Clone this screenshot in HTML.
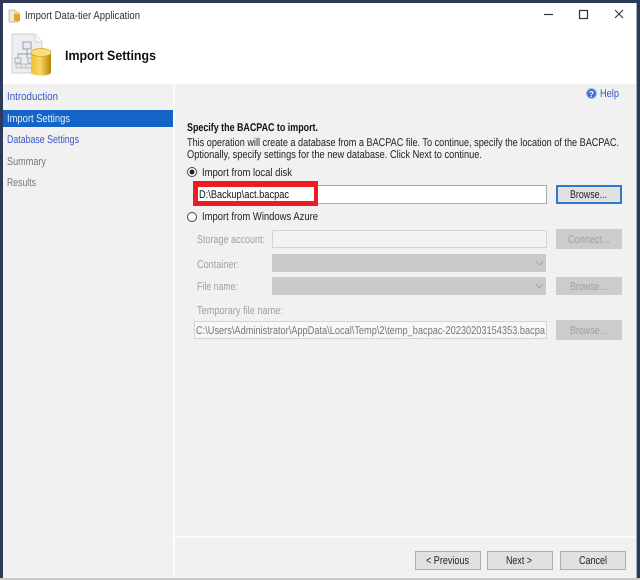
<!DOCTYPE html>
<html><head><meta charset="utf-8"><style>
html,body{margin:0;padding:0;background:#fff}
svg{display:block;filter:blur(.35px)}
text{font-family:"Liberation Sans",sans-serif;font-size:11.2px;fill:#222}
.d{fill:#a0a0a0}
.l{fill:#3a55c8}
</style></head><body>
<svg width="640" height="580" viewBox="0 0 640 580" xmlns="http://www.w3.org/2000/svg" shape-rendering="crispEdges">
<rect width="640" height="580" fill="#fff"/>
<rect x="3" y="84" width="634" height="494" fill="#f0f1f0"/>
<rect x="173" y="84" width="2" height="494" fill="#fbfbfb"/>
<rect x="175" y="536" width="462" height="2" fill="#fbfbfb"/>
<rect width="640" height="3" fill="#2a3a58"/>
<rect width="3" height="580" fill="#2a3a58"/>
<rect x="637" width="3" height="580" fill="#2a3a58"/>
<rect x="636" y="3" width="1" height="575" fill="#a8b0b8"/>
<rect y="578" width="640" height="2" fill="#c8c8c8"/>

<!-- title icon -->
<g shape-rendering="auto">
<path d="M9 10h6l3 3v9H9z" fill="#e8e8e8" stroke="#aaa" stroke-width=".7"/>
<rect x="14" y="13" width="6" height="8" rx="1" fill="#e0a820"/>
<ellipse cx="17" cy="13" rx="3" ry="1.3" fill="#f5d870"/>
<!-- header icon -->
<path d="M12 34h23l7 8v31H12z" fill="#eeeeee" stroke="#d0d0d0"/>
<path d="M35 34v8h7" fill="#f8f8f8" stroke="#d4d4d4"/>
<rect x="23" y="42" width="8" height="7" fill="#e4ecf2" stroke="#8a9aa8" stroke-width=".9"/>
<path d="M27 49v5M18 58v-4h19v4M27 54v4" fill="none" stroke="#8a9aa8" stroke-width=".9"/>
<rect x="15" y="58" width="6" height="5" fill="#e4ecf2" stroke="#9aa6b0" stroke-width=".8"/>
<rect x="28" y="58" width="6" height="5" fill="#e4ecf2" stroke="#9aa6b0" stroke-width=".8"/>
<path d="M16 64h16v4H16zM21 64v4M26 64v4" fill="#e8e8e8" stroke="#b4b4b4" stroke-width=".8"/>
<defs><linearGradient id="c" x1="0" x2="1" y1="0" y2="0"><stop offset="0" stop-color="#f0c030"/><stop offset=".45" stop-color="#f6d868"/><stop offset="1" stop-color="#b88408"/></linearGradient></defs>
<path d="M31 53v19c0 2.500 5 3.500 10.500 3.500S51 74.500 51 72V53z" fill="url(#c)"/>
<ellipse cx="41" cy="52.500" rx="10" ry="4" fill="#f8de80" stroke="#d8a820" stroke-width=".8"/>
<!-- help icon -->
<circle cx="591.500" cy="93.500" r="5" fill="#3f6fc8" stroke="#a8bce8"/>
<text x="589" y="97" style="font-size:8px;font-weight:bold;fill:#fff">?</text>
<!-- window buttons -->
<path d="M544 14.500h9" stroke="#333" stroke-width="1.200" fill="none"/>
<rect x="579.500" y="10.500" width="8" height="8" fill="none" stroke="#333" stroke-width="1.200"/>
<path d="M615 10l8 8M623 10l-8 8" stroke="#333" stroke-width="1.100" fill="none"/>
<!-- text -->
<g shape-rendering="auto" text-rendering="geometricPrecision">
<text x="25" y="19" textLength="115" lengthAdjust="spacingAndGlyphs" style="fill:#333">Import Data-tier Application</text>
<text x="65" y="60" textLength="91" lengthAdjust="spacingAndGlyphs" style="font-size:13.500px;font-weight:bold;fill:#111">Import Settings</text>
<text x="7" y="100" textLength="51" lengthAdjust="spacingAndGlyphs" class="l">Introduction</text>
<rect x="3" y="110" width="170" height="17" fill="#1464c8"/>
<text x="7" y="122" textLength="63" lengthAdjust="spacingAndGlyphs" style="fill:#e8f0ff">Import Settings</text>
<text x="7" y="143" textLength="72" lengthAdjust="spacingAndGlyphs" class="l">Database Settings</text>
<text x="7" y="165" textLength="39" lengthAdjust="spacingAndGlyphs" style="fill:#777">Summary</text>
<text x="7" y="186" textLength="29" lengthAdjust="spacingAndGlyphs" style="fill:#777">Results</text>
<text x="600" y="97" textLength="19" lengthAdjust="spacingAndGlyphs" class="l">Help</text>
<text x="187" y="131" textLength="131" lengthAdjust="spacingAndGlyphs" style="font-weight:bold;fill:#111">Specify the BACPAC to import.</text>
<text x="187" y="146" textLength="432" lengthAdjust="spacingAndGlyphs">This operation will create a database from a BACPAC file. To continue, specify the location of the BACPAC.</text>
<text x="187" y="158" textLength="295" lengthAdjust="spacingAndGlyphs">Optionally, specify settings for the new database. Click Next to continue.</text>
<circle cx="192" cy="172" r="4.500" fill="#fff" stroke="#444"/>
<circle cx="192" cy="172" r="2.500" fill="#222"/>
<text x="202" y="176" textLength="90" lengthAdjust="spacingAndGlyphs">Import from local disk</text>
<circle cx="192" cy="217" r="4.500" fill="#fff" stroke="#444"/>
<text x="202" y="220" textLength="116" lengthAdjust="spacingAndGlyphs">Import from Windows Azure</text>
</g>
</g>

<!-- main input -->
<rect x="193.500" y="185.500" width="353" height="18" fill="#fff" stroke="#a8a8a8"/>
<path d="M193 181h125v25H193z M198 187v14h116v-14z" fill="#ed1c24" fill-rule="evenodd"/>
<rect x="556" y="185" width="66" height="19" fill="#2a7ad0"/>
<rect x="558" y="187" width="62" height="15" fill="#e1e1e1"/>

<!-- disabled -->
<rect x="272.500" y="230.500" width="274" height="17" fill="#f2f3f2" stroke="#d4d4d4"/>
<rect x="556" y="229" width="66" height="20" fill="#cccccc"/>
<rect x="272" y="254" width="274" height="18" fill="#cacaca"/>
<rect x="272" y="277" width="274" height="18" fill="#cacaca"/>
<rect x="556" y="277" width="66" height="18" fill="#cccccc"/>
<rect x="194.500" y="321.500" width="352" height="17" fill="#f6f7f6" stroke="#d4d4d4"/>
<rect x="556" y="320" width="66" height="20" fill="#cccccc"/>
<g shape-rendering="auto">
<path d="M536 261.500l3.500 3.500 3.500-3.500M536 284.500l3.500 3.500 3.500-3.500" fill="none" stroke="#a4a4a4"/>
</g>

<!-- bottom buttons -->
<g fill="#e1e1e1" stroke="#adadad">
<rect x="415.500" y="551.500" width="65" height="18"/>
<rect x="487.500" y="551.500" width="65" height="18"/>
<rect x="560.500" y="551.500" width="65" height="18"/>
</g>

<g shape-rendering="auto" text-rendering="geometricPrecision">
<text x="199" y="198" textLength="90" lengthAdjust="spacingAndGlyphs" style="fill:#111">D:\Backup\act.bacpac</text>
<text x="570" y="198" textLength="37" lengthAdjust="spacingAndGlyphs" style="fill:#222">Browse...</text>
<text x="197" y="243" textLength="68" lengthAdjust="spacingAndGlyphs" class="d">Storage account:</text>
<text x="568" y="243" textLength="42" lengthAdjust="spacingAndGlyphs" class="d">Connect...</text>
<text x="197" y="268" textLength="42" lengthAdjust="spacingAndGlyphs" class="d">Container:</text>
<text x="197" y="290" textLength="41" lengthAdjust="spacingAndGlyphs" class="d">File name:</text>
<text x="570" y="290" textLength="37" lengthAdjust="spacingAndGlyphs" class="d">Browse...</text>
<text x="197" y="314" textLength="86" lengthAdjust="spacingAndGlyphs" class="d">Temporary file name:</text>
<text x="196" y="334" textLength="349" lengthAdjust="spacingAndGlyphs" style="fill:#777">C:\Users\Administrator\AppData\Local\Temp\2\temp_bacpac-20230203154353.bacpa</text>
<text x="570" y="334" textLength="37" lengthAdjust="spacingAndGlyphs" class="d">Browse...</text>
<text x="426" y="564" textLength="43" lengthAdjust="spacingAndGlyphs">&lt; Previous</text>
<text x="506" y="564" textLength="26" lengthAdjust="spacingAndGlyphs">Next &gt;</text>
<text x="579" y="564" textLength="28" lengthAdjust="spacingAndGlyphs">Cancel</text>
</g>
</svg>
</body></html>
